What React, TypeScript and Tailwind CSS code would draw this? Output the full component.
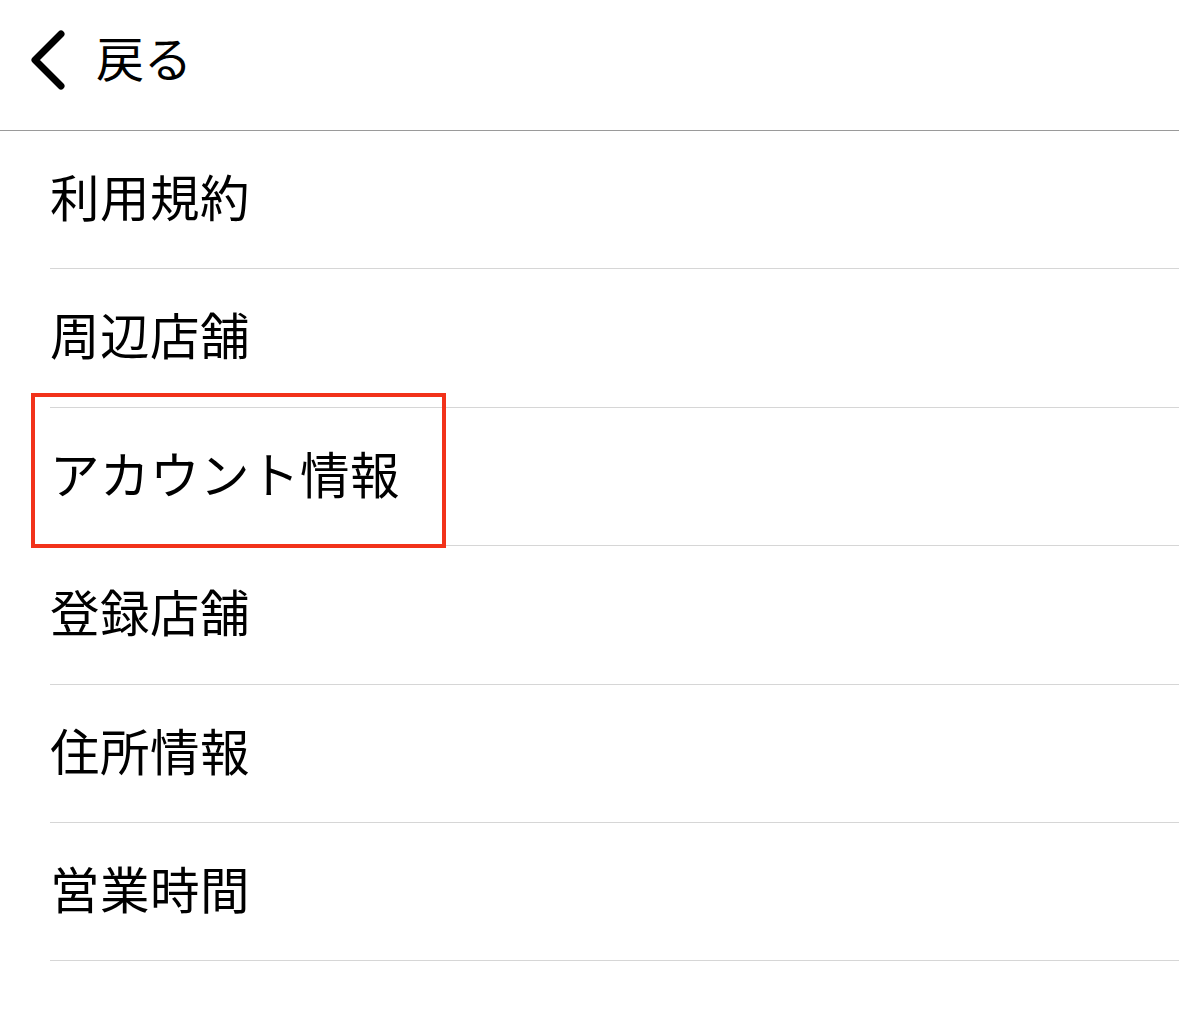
const items = ["利用規約", "周辺店舗", "アカウント情報", "登録店舗", "住所情報", "営業時間"];

export default function App() {
  return (
    <div
      className="min-h-screen w-[1179px] bg-white text-black"
      style={{ fontFamily: '"Noto Sans CJK JP", "Noto Sans", sans-serif' }}
    >
      {/* Header */}
      <div className="flex h-[131px] items-center border-b border-[#9a9a9a] pb-[10px]">
        <button className="ml-[24px] flex h-[70px] w-[48px] items-center justify-center" aria-label="戻る">
          <svg width="44" height="64" viewBox="0 0 44 64" fill="none">
            <path d="M35 6 L9 32 L35 58" stroke="#000" strokeWidth="7" strokeLinecap="round" strokeLinejoin="round" />
          </svg>
        </button>
        <span className="mb-[8px] ml-[24px] text-[48px] leading-none">戻る</span>
      </div>

      {/* Menu list */}
      <ul className="pl-[50px]">
        {items.map((label, i) => (
          <li key={label} className="relative flex h-[138.4px] items-center border-b border-[#d6d6d6] pb-[8px]">
            <span className="text-[49.5px] leading-none tracking-[0.5px]">{label}</span>
            {i === 2 && (
              <div className="pointer-events-none absolute left-[-19px] top-[-15px] h-[155px] w-[415px] border-[4px] border-[#f2321a]" />
            )}
          </li>
        ))}
      </ul>
    </div>
  );
}
